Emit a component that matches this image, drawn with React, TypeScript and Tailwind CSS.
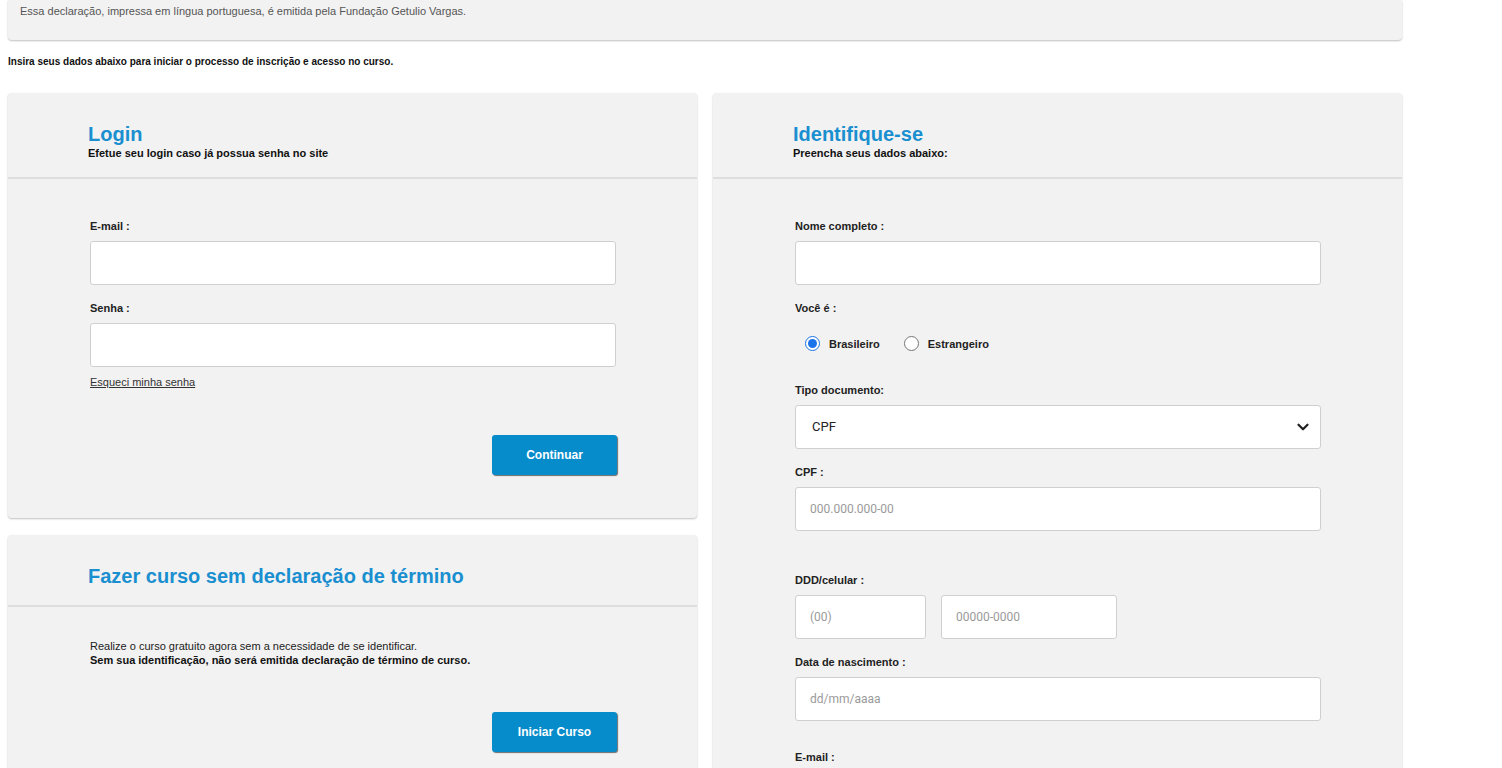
import { ChevronDown } from 'lucide-react'

const font = "font-['Liberation_Sans',Arial,sans-serif]"

function Label({ children, className = '' }: { children: React.ReactNode; className?: string }) {
  return <div className={'text-[11px] font-bold leading-[14px] text-[#222] ' + className}>{children}</div>
}

function Field({ placeholder = '', className = 'w-[526px]' }: { placeholder?: string; className?: string }) {
  return (
    <div
      className={
        'flex h-[44px] items-center rounded-[3px] border border-[#cfcfcf] bg-white pl-[14px] font-[Roboto,sans-serif] text-[12px] text-[#9a9a9a] ' +
        className
      }
    >
      {placeholder}
    </div>
  )
}

function CardHeader({ title, sub }: { title: string; sub?: string }) {
  return (
    <div className="border-b-2 border-[#dedede] px-[80px] pt-[29px] pb-[17px]">
      <div className="text-[20px] font-bold leading-[24px] text-[#1a8fd0]">{title}</div>
      {sub && <div className="text-[11px] font-bold leading-[14px] text-[#111]">{sub}</div>}
    </div>
  )
}

function BlueButton({ children }: { children: React.ReactNode }) {
  return (
    <button
      type="button"
      className="h-[40px] w-[125px] rounded-[3px] bg-[#078ccb] text-[12px] font-bold text-white shadow-[1px_1px_1px_rgba(0,0,0,0.55)]"
    >
      {children}
    </button>
  )
}

function Radio({ checked, label }: { checked?: boolean; label: string }) {
  return (
    <label className="flex items-center gap-[9px]">
      <span
        className={
          'flex h-[15px] w-[15px] items-center justify-center rounded-full border bg-white ' +
          (checked ? 'border-[#1a73e8]' : 'border-[#767676]')
        }
      >
        {checked && <span className="h-[9px] w-[9px] rounded-full bg-[#1a73e8]" />}
      </span>
      <span className="mt-[3px] text-[11px] font-bold text-[#222]">{label}</span>
    </label>
  )
}

export default function App() {
  return (
    <div className={font + ' min-h-[768px] bg-white'}>
      <div className="ml-[8px] w-[1394px]">
        <div className="h-[40px] rounded-b-[4px] bg-[#f2f2f2] px-[12px] pt-[4px] text-[11px] leading-[14px] text-[#555] shadow-[0_1px_2px_rgba(0,0,0,0.25)]">
          Essa declaração, impressa em língua portuguesa, é emitida pela Fundação Getulio Vargas.
        </div>

        <div className="mt-[15px] text-[10px] font-bold leading-[14px] text-[#111]">
          Insira seus dados abaixo para iniciar o processo de inscrição e acesso no curso.
        </div>

        <div className="mt-[24px] flex items-start gap-[16px]">
          <div className="flex w-[689px] flex-col gap-[17px]">
            <div className="rounded-[4px] bg-[#f2f2f2] shadow-[0_1px_2px_rgba(0,0,0,0.25)]">
              <CardHeader title="Login" sub="Efetue seu login caso já possua senha no site" />
              <div className="pl-[82px] pt-[40px] pb-[43px]">
                <Label>E-mail :</Label>
                <Field className="mt-[8px] w-[526px]" />
                <Label className="mt-[16px]">Senha :</Label>
                <Field className="mt-[8px] w-[526px]" />
                <div className="mt-[8px] text-[11px] leading-[14px] text-[#333] underline">Esqueci minha senha</div>
                <div className="mt-[46px] flex w-[527px] justify-end">
                  <BlueButton>Continuar</BlueButton>
                </div>
              </div>
            </div>

            <div className="rounded-[4px] bg-[#f2f2f2] shadow-[0_1px_2px_rgba(0,0,0,0.25)]">
              <CardHeader title="Fazer curso sem declaração de término" />
              <div className="pl-[82px] pt-[32px] pb-[40px]">
                <div className="text-[11px] leading-[14px] text-[#222]">
                  Realize o curso gratuito agora sem a necessidade de se identificar.
                </div>
                <div className="text-[11px] font-bold leading-[14px] text-[#111]">
                  Sem sua identificação, não será emitida declaração de término de curso.
                </div>
                <div className="mt-[45px] flex w-[527px] justify-end">
                  <BlueButton>Iniciar Curso</BlueButton>
                </div>
              </div>
            </div>
          </div>

          <div className="w-[689px] rounded-[4px] bg-[#f2f2f2] shadow-[0_1px_2px_rgba(0,0,0,0.25)]">
            <CardHeader title="Identifique-se" sub="Preencha seus dados abaixo:" />
            <div className="pl-[82px] pt-[40px] pb-[40px]">
              <Label>Nome completo :</Label>
              <Field className="mt-[8px] w-[526px]" />
              <Label className="mt-[16px]">Você é :</Label>
              <div className="mt-[18px] flex h-[20px] items-center gap-[24px] pl-[10px]">
                <Radio checked label="Brasileiro" />
                <Radio label="Estrangeiro" />
              </div>
              <Label className="mt-[30px]">Tipo documento:</Label>
              <div className="mt-[8px] flex h-[44px] w-[526px] items-center justify-between rounded-[3px] border border-[#cfcfcf] bg-white pl-[16px] pr-[8px] font-[Roboto,sans-serif] text-[13px] text-[#222]">
                <span>CPF</span>
                <ChevronDown className="h-[18px] w-[18px] text-[#222]" strokeWidth={3} />
              </div>
              <Label className="mt-[16px]">CPF :</Label>
              <Field className="mt-[8px] w-[526px]" placeholder="000.000.000-00" />
              <Label className="mt-[42px]">DDD/celular :</Label>
              <div className="mt-[8px] flex gap-[15px]">
                <Field className="w-[131px]" placeholder="(00)" />
                <Field className="w-[176px]" placeholder="00000-0000" />
              </div>
              <Label className="mt-[16px]">Data de nascimento :</Label>
              <Field className="mt-[8px] w-[526px]" placeholder="dd/mm/aaaa" />
              <Label className="mt-[29px]">E-mail :</Label>
              <Field className="mt-[8px] w-[526px]" />
            </div>
          </div>
        </div>
      </div>
    </div>
  )
}
